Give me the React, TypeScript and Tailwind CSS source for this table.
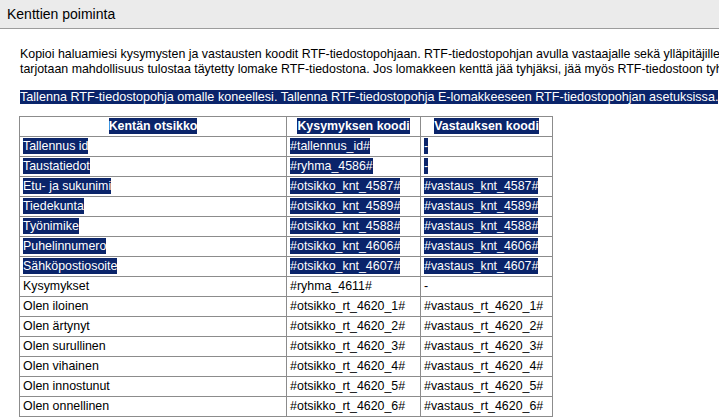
const sel = 'bg-[#0a246a] text-white';

type Row = { label: string; q: string; a: string; picked?: boolean };

const rows: Row[] = [
    { label: 'Tallennus id', q: '#tallennus_id#', a: '-', picked: true },
    { label: 'Taustatiedot', q: '#ryhma_4586#', a: '-', picked: true },
    { label: 'Etu- ja sukunimi', q: '#otsikko_knt_4587#', a: '#vastaus_knt_4587#', picked: true },
    { label: 'Tiedekunta', q: '#otsikko_knt_4589#', a: '#vastaus_knt_4589#', picked: true },
    { label: 'Työnimike', q: '#otsikko_knt_4588#', a: '#vastaus_knt_4588#', picked: true },
    { label: 'Puhelinnumero', q: '#otsikko_knt_4606#', a: '#vastaus_knt_4606#', picked: true },
    { label: 'Sähköpostiosoite', q: '#otsikko_knt_4607#', a: '#vastaus_knt_4607#', picked: true },
    { label: 'Kysymykset', q: '#ryhma_4611#', a: '-' },
    { label: 'Olen iloinen', q: '#otsikko_rt_4620_1#', a: '#vastaus_rt_4620_1#' },
    { label: 'Olen ärtynyt', q: '#otsikko_rt_4620_2#', a: '#vastaus_rt_4620_2#' },
    { label: 'Olen surullinen', q: '#otsikko_rt_4620_3#', a: '#vastaus_rt_4620_3#' },
    { label: 'Olen vihainen', q: '#otsikko_rt_4620_4#', a: '#vastaus_rt_4620_4#' },
    { label: 'Olen innostunut', q: '#otsikko_rt_4620_5#', a: '#vastaus_rt_4620_5#' },
    { label: 'Olen onnellinen', q: '#otsikko_rt_4620_6#', a: '#vastaus_rt_4620_6#' },
];

function Cell({ text, picked }: { text: string; picked?: boolean }) {
    return (
        <td className="h-[20px] border border-[#8c8c8c] px-[3px] py-0 align-middle">
            <span className={picked ? `${sel} py-px` : ''}>{text}</span>
        </td>
    );
}

export default function App() {
    return (
        <div className="h-[417px] w-[719px] overflow-hidden bg-white font-['Liberation_Sans',Arial,sans-serif] text-[12.4px] leading-[15px] text-black">
            {/* title bar */}
            <div className="flex h-[29px] items-center border-b border-[#9c9c9c] bg-[#ebebeb] px-[7px] text-[14px]">
                Kenttien poiminta
            </div>

            <div className="pl-[20px] pt-[18px] whitespace-nowrap">
                <p>
                    Kopioi haluamiesi kysymysten ja vastausten koodit RTF-tiedostopohjaan. RTF-tiedostopohjan avulla vastaajalle sekä ylläpitäjille
                </p>
                <p>
                    tarjotaan mahdollisuus tulostaa täytetty lomake RTF-tiedostona. Jos lomakkeen kenttä jää tyhjäksi, jää myös RTF-tiedostoon tyhjä kenttä.
                </p>
                <p className="mt-[13px] text-[12.6px]">
                    <span className={sel}>
                        Tallenna RTF-tiedostopohja omalle koneellesi. Tallenna RTF-tiedostopohja E-lomakkeeseen RTF-tiedostopohjan asetuksissa.
                    </span>
                </p>
            </div>

            <div className="pl-[19px] pt-[11px]">
                <table className="w-[534px] border-collapse">
                    <colgroup>
                        <col className="w-[268px]" />
                        <col className="w-[134px]" />
                        <col className="w-[132px]" />
                    </colgroup>
                    <thead>
                        <tr>
                            {['Kentän otsikko', 'Kysymyksen koodi', 'Vastauksen koodi'].map((h) => (
                                <th key={h} className="h-[20px] border border-[#8c8c8c] px-[3px] py-0 text-center font-bold">
                                    <span className={`${sel} py-px`}>{h}</span>
                                </th>
                            ))}
                        </tr>
                    </thead>
                    <tbody>
                        {rows.map((r) => (
                            <tr key={r.label}>
                                <Cell text={r.label} picked={r.picked} />
                                <Cell text={r.q} picked={r.picked} />
                                <Cell text={r.a} picked={r.picked} />
                            </tr>
                        ))}
                    </tbody>
                </table>
            </div>
        </div>
    );
}
